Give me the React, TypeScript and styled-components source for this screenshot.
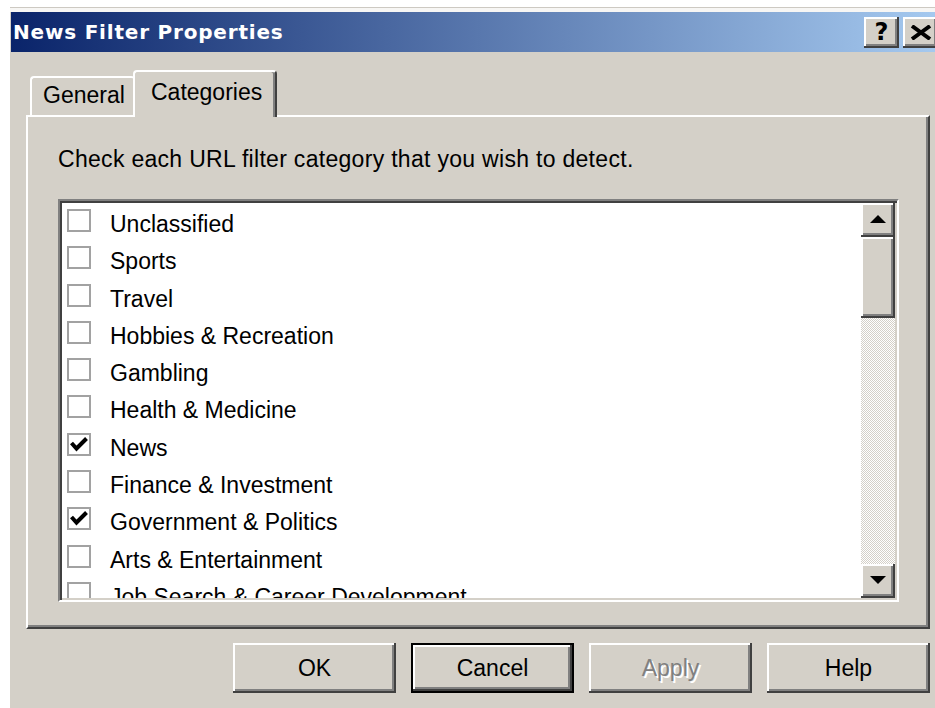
import styled, { createGlobalStyle, css } from "styled-components";

const face = "#d4d0c8";
const shadow = "#808080";
const darkShadow = "#404040";

const GlobalStyle = createGlobalStyle`
  html, body {
    margin: 0;
    background: #fff;
  }

  body {
    font-family: "Liberation Sans", Arial, sans-serif;
    color: #000;
  }
`;

const Screen = styled.div`
  width: 935px;
  height: 708px;
  overflow: hidden;
  box-sizing: border-box;
  padding: 7px 0 0 10px;
  background: #fff;
`;

const Window = styled.div`
  width: 932px;
  height: 701px;
  box-sizing: border-box;
  display: flex;
  flex-direction: column;
  border-top: 1px solid #cdc9c2;
  padding-top: 4px;
  background: linear-gradient(#f7f6f4 0 4px, ${face} 4px);
`;

const TitleBar = styled.div`
  height: 40px;
  margin-left: 1px;
  display: flex;
  align-items: center;
  padding: 0 4px 0 2px;
  background: linear-gradient(90deg, #0a246a 0%, #a6caf0 100%);
`;

const Title = styled.span`
  font-family: "DejaVu Sans", Verdana, sans-serif;
  font-weight: bold;
  font-size: 20px;
  letter-spacing: 0.8px;
  color: #fff;
`;

const CaptionButtons = styled.div`
  margin-left: auto;
  display: flex;
  gap: 4px;
`;

const CaptionButton = styled.div`
  width: 35px;
  height: 31px;
  box-sizing: border-box;
  display: flex;
  align-items: center;
  justify-content: center;
  background: ${face};
  box-shadow: inset -2px -2px ${darkShadow}, inset 2px 2px #fff,
    inset -4px -4px ${shadow};
  font-family: "DejaVu Sans", Verdana, sans-serif;
  font-weight: bold;
  font-size: 24px;
  line-height: 1;
  color: #000;
`;

const Body = styled.div`
  display: flex;
  flex-direction: column;
  padding: 18px 12px 0 16px;
`;

const TabStrip = styled.div`
  position: relative;
  z-index: 1;
  display: flex;
  align-items: flex-end;
  height: 45px;
  padding-left: 4px;
`;

const Tab = styled.div<{ $active?: boolean }>`
  box-sizing: border-box;
  background: ${face};
  border-top: 2px solid #fff;
  border-left: 2px solid #fff;
  border-radius: 4px 4px 0 0;
  font-size: 23px;
  line-height: 26px;
  white-space: nowrap;

  ${({ $active }) =>
    $active
      ? css`
          width: 144px;
          height: 47px;
          margin: 0 0 -2px -2px;
          padding: 7px 0 0 16px;
          border-right: 2px solid ${darkShadow};
          box-shadow: inset -2px 0 ${shadow};
        `
      : css`
          width: 105px;
          height: 39px;
          padding: 4px 0 0 11px;
        `}
`;

const Panel = styled.div`
  height: 514px;
  box-sizing: border-box;
  border-top: 2px solid #fff;
  border-left: 2px solid #fff;
  border-right: 2px solid ${darkShadow};
  border-bottom: 2px solid ${darkShadow};
  box-shadow: inset -2px -2px ${shadow};
  padding: 29px 0 0 30px;
`;

const Prompt = styled.div`
  font-size: 23px;
  line-height: 26px;
  letter-spacing: 0.3px;
  white-space: nowrap;
`;

const ListBox = styled.div`
  width: 841px;
  height: 403px;
  margin-top: 27px;
  box-sizing: border-box;
  display: flex;
  padding: 2px;
  background: #fff;
  border-style: solid;
  border-width: 2px;
  border-color: ${shadow} #fff #fff ${shadow};
  box-shadow: inset 2px 2px ${darkShadow}, inset -2px -2px ${face};
`;

const Items = styled.div`
  flex: 1;
  overflow: hidden;
  padding: 3px 0 0 5px;
`;

const Row = styled.div`
  display: flex;
  align-items: flex-start;
  height: 37.3px;
`;

const CheckBox = styled.div`
  flex: none;
  width: 24px;
  height: 23px;
  margin-top: 3px;
  box-sizing: border-box;
  border: 2px solid #a2a2a2;
  background: #fff;

  svg {
    display: block;
  }
`;

const Label = styled.span`
  margin-left: 19px;
  font-size: 23px;
  line-height: 37.3px;
  white-space: nowrap;
`;

const ScrollBar = styled.div`
  flex: none;
  width: 34px;
  display: flex;
  flex-direction: column;
`;

const raised = css`
  box-sizing: border-box;
  background: ${face};
  box-shadow: inset -2px -2px ${darkShadow}, inset 2px 2px #fff,
    inset -4px -4px ${shadow};
`;

const ArrowButton = styled.div<{ $down?: boolean }>`
  ${raised};
  height: 34px;
  display: flex;
  align-items: center;
  justify-content: center;

  &::after {
    content: "";
    width: 0;
    height: 0;
    margin: -2px 0 0 -1px;
    border-left: 8px solid transparent;
    border-right: 8px solid transparent;
    ${({ $down }) =>
      $down
        ? css`
            border-top: 8px solid #000;
          `
        : css`
            border-bottom: 8px solid #000;
          `}
  }
`;

const Thumb = styled.div`
  ${raised};
  height: 81px;
`;

const Track = styled.div`
  flex: 1;
  background: repeating-conic-gradient(${face} 0 25%, #fff 0 50%) 0 0 / 2px
    2px;
`;

const ButtonRow = styled.div`
  display: flex;
  justify-content: flex-end;
  gap: 15px;
  margin-top: 14px;
`;

const PushButton = styled.button<{ $default?: boolean }>`
  width: 163px;
  height: 50px;
  box-sizing: border-box;
  padding: 0;
  border: none;
  background: ${face};
  font-family: inherit;
  font-size: 23px;
  color: #000;
  box-shadow: inset -2px -2px ${darkShadow}, inset 2px 2px #fff,
    inset -4px -4px ${shadow};

  ${({ $default }) =>
    $default &&
    css`
      box-shadow: inset 0 0 0 2px #000, inset -4px -4px ${darkShadow},
        inset 4px 4px #fff, inset -6px -6px ${shadow};
    `}

  &:disabled {
    color: ${shadow};
    text-shadow: 2px 2px #fff;
  }
`;

const categories = [
  { name: "Unclassified", checked: false },
  { name: "Sports", checked: false },
  { name: "Travel", checked: false },
  { name: "Hobbies & Recreation", checked: false },
  { name: "Gambling", checked: false },
  { name: "Health & Medicine", checked: false },
  { name: "News", checked: true },
  { name: "Finance & Investment", checked: false },
  { name: "Government & Politics", checked: true },
  { name: "Arts & Entertainment", checked: false },
  { name: "Job Search & Career Development", checked: false },
];

const CheckMark = () => (
  <svg width="20" height="19" viewBox="0 0 20 19">
    <polyline
      points="2.5,8 7.5,13.5 17.5,3.5"
      fill="none"
      stroke="#000"
      strokeWidth="4"
    />
  </svg>
);

const CloseGlyph = () => (
  <svg width="22" height="15" viewBox="0 0 22 15">
    <path d="M2 1 L20 14 M20 1 L2 14" stroke="#000" strokeWidth="4" />
  </svg>
);

const App = () => {
  return (
    <Screen>
      <GlobalStyle />
      <Window>
        <TitleBar>
          <Title>News Filter Properties</Title>
          <CaptionButtons>
            <CaptionButton>?</CaptionButton>
            <CaptionButton>
              <CloseGlyph />
            </CaptionButton>
          </CaptionButtons>
        </TitleBar>
        <Body>
          <TabStrip>
            <Tab>General</Tab>
            <Tab $active>Categories</Tab>
          </TabStrip>
          <Panel>
            <Prompt>
              Check each URL filter category that you wish to detect.
            </Prompt>
            <ListBox>
              <Items>
                {categories.map((item) => (
                  <Row key={item.name}>
                    <CheckBox>{item.checked && <CheckMark />}</CheckBox>
                    <Label>{item.name}</Label>
                  </Row>
                ))}
              </Items>
              <ScrollBar>
                <ArrowButton />
                <Thumb />
                <Track />
                <ArrowButton $down />
              </ScrollBar>
            </ListBox>
          </Panel>
          <ButtonRow>
            <PushButton>OK</PushButton>
            <PushButton $default>Cancel</PushButton>
            <PushButton disabled>Apply</PushButton>
            <PushButton>Help</PushButton>
          </ButtonRow>
        </Body>
      </Window>
    </Screen>
  );
};

export default App;
